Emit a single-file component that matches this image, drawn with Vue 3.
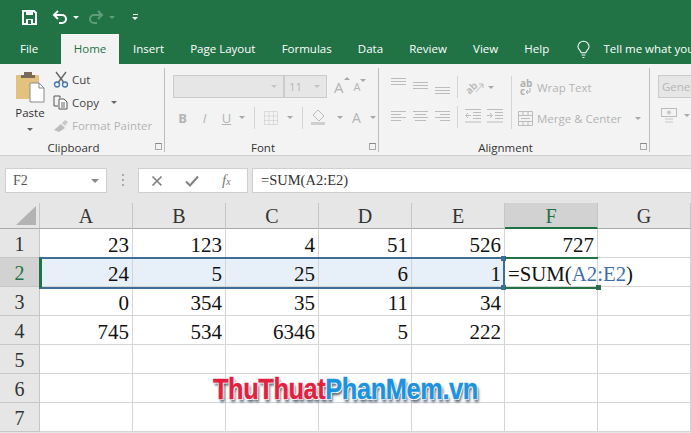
<script setup>
const tabs = ['Insert', 'Page Layout', 'Formulas', 'Data', 'Review', 'View', 'Help']
const cols = ['A', 'B', 'C', 'D', 'E', 'F', 'G']
const rows = [
  ['23', '123', '4', '51', '526', '727', ''],
  ['24', '5', '25', '6', '1', '', ''],
  ['0', '354', '35', '11', '34', '', ''],
  ['745', '534', '6346', '5', '222', '', ''],
  ['', '', '', '', '', '', ''],
  ['', '', '', '', '', '', ''],
  ['', '', '', '', '', '', '']
]
</script>

<template>
  <div class="app">
    <header class="top">
      <div class="qat">
        <svg class="q-save" width="15" height="15" viewBox="0 0 15 15"><path d="M1 1h11l2 2v11H1z" fill="none" stroke="#fff" stroke-width="2"/><path d="M4 1h7v4H4zM4 9h7v5H4z" fill="#fff"/><path d="M6 10h3v4H6z" fill="#217346"/></svg>
        <svg class="q-undo" width="15" height="14" viewBox="0 0 15 14"><path d="M6 1 2 5l4 4M2 5h8a3.500 3.500 0 0 1 0 8H7" fill="none" stroke="#fff" stroke-width="2"/></svg>
        <span class="tri white"></span>
        <svg class="q-redo" width="15" height="14" viewBox="0 0 15 14"><path d="M9 1l4 4-4 4M13 5H5a3.500 3.500 0 0 0 0 8h3" fill="none" stroke="#5f9c7c" stroke-width="2"/></svg>
        <span class="tri dim"></span>
        <span class="q-more"><i></i><b></b></span>
      </div>
      <nav class="tabs">
        <span class="tab file">File</span>
        <span class="tab home">Home</span>
        <span v-for="t in tabs" :key="t" class="tab">{{ t }}</span>
        <svg class="bulb" width="13" height="19" viewBox="0 0 14 19"><path d="M4.500 13C4 10 1 9.500 1 6.500a6 6 0 0 1 12 0c0 3-3 3.500-3.500 6.500zM5 15.500h4M6 18h2" fill="none" stroke="#fff" stroke-width="1.100"/></svg>
        <span class="tab tell">Tell me what you</span>
      </nav>
    </header>

    <section class="ribbon">
      <div class="group clip">
        <div class="body clip-body">
          <div class="paste">
            <svg width="30" height="31" viewBox="0 0 30 31"><rect x="1" y="3" width="23" height="24" rx="1" fill="#e3c17e"/><rect x="9" y="0" width="8" height="5" fill="#7a6a58"/><rect x="6" y="3" width="14" height="3" fill="#7a6a58"/><path d="M15 11h9l5 5v14H15z" fill="#fff" stroke="#8a8a8a"/><path d="M24 11v5h5" fill="none" stroke="#8a8a8a"/></svg>
            <span class="paste-label">Paste</span>
            <span class="tri"></span>
          </div>
          <div class="clip-list">
            <div class="clip-row">
              <svg width="16" height="17" viewBox="0 0 16 17"><path d="M3 1l7.500 10M13 1 5.500 11" stroke="#666" stroke-width="1.400" fill="none"/><circle cx="4" cy="13.500" r="2.500" fill="none" stroke="#3f74b5" stroke-width="1.300"/><circle cx="12" cy="13.500" r="2.500" fill="none" stroke="#3f74b5" stroke-width="1.300"/></svg>
              <span>Cut</span>
            </div>
            <div class="clip-row">
              <svg width="16" height="15" viewBox="0 0 16 15"><path d="M1 1h6v2M1 1v10h4" fill="none" stroke="#555"/><path d="M6 4h5l3 3v7H6z" fill="#fff" stroke="#555"/><path d="M8 8h4M8 10h4M8 12h4" stroke="#666"/></svg>
              <span>Copy</span><span class="tri copy-tri"></span>
            </div>
            <div class="clip-row dim">
              <svg width="16" height="14" viewBox="0 0 16 14"><path d="M1 11 8 5l4 4-6 4z" fill="#bdbdbd"/><path d="M9 4l3-3 3 2-3 4z" fill="#c9c9c9"/></svg>
              <span>Format Painter</span>
            </div>
          </div>
        </div>
        <footer class="label">Clipboard<i class="launch"></i></footer>
      </div>

      <div class="group font">
        <div class="body font-body">
          <div class="font-row">
            <span class="combo name"><span class="tri"></span></span>
            <span class="combo size"><em>11</em><span class="tri"></span></span>
            <span class="glyph big">A<sup class="tri up"></sup></span>
            <span class="glyph small">A<sup class="tri"></sup></span>
          </div>
          <div class="font-row second">
            <b class="fmt first">B</b>
            <i class="fmt">I</i>
            <u class="fmt">U</u>
            <span class="tri"></span>
            <span class="vsep"></span>
            <svg width="14" height="14" viewBox="0 0 14 14"><path d="M.5.500h13v13H.5zM5 .5v13M9.500.500v13M.5 5h13M.5 9.500h13" fill="none" stroke="#c4c4c4" stroke-dasharray="1 1"/></svg>
            <span class="tri"></span>
            <span class="vsep"></span>
            <svg class="bucket" width="18" height="17" viewBox="0 0 18 17"><path d="M8 1l6 6-5 5-6-6z" fill="none" stroke="#bbb"/><rect x="1" y="13" width="14" height="3" fill="#cfcfcf"/></svg>
            <span class="tri"></span>
            <span class="glyph a2">A</span>
            <span class="tri"></span>
          </div>
        </div>
        <footer class="label">Font<i class="launch"></i></footer>
      </div>

      <div class="group align">
        <div class="body align-body">
          <div class="align-grid">
            <svg class="va top1" width="15" height="7" viewBox="0 0 15 7"><path d="M0 .5h15M0 3.500h15M0 6.500h15" stroke="#bcbcbc"/></svg>
            <svg class="va mid1" width="15" height="7" viewBox="0 0 15 7"><path d="M0 .5h15M0 3.500h15M0 6.500h15" stroke="#bcbcbc"/></svg>
            <svg class="va low1" width="15" height="7" viewBox="0 0 15 7"><path d="M0 .5h15M0 3.500h15M0 6.500h15" stroke="#bcbcbc"/></svg>
            <svg width="15" height="12" viewBox="0 0 15 12"><path d="M0 .5h15M0 3.500h10M0 6.500h15M0 9.500h10" stroke="#bcbcbc"/></svg>
            <svg width="15" height="12" viewBox="0 0 15 12"><path d="M0 .5h15M2 3.500h11M0 6.500h15M2 9.500h11" stroke="#bcbcbc"/></svg>
            <svg width="15" height="12" viewBox="0 0 15 12"><path d="M0 .5h15M5 3.500h10M0 6.500h15M5 9.500h10" stroke="#bcbcbc"/></svg>
          </div>
          <div class="seps"><span class="vsep"></span><span class="vsep"></span></div>
          <div class="indent">
            <div class="orient">
              <span class="rot">ab</span>
              <svg class="rot-arrow" width="9" height="11" viewBox="0 0 9 11"><path d="M1 10 8 2M8 2v4M8 2H4" fill="none" stroke="#bcbcbc"/></svg>
              <span class="tri"></span>
            </div>
            <div class="ind-row">
              <svg width="16" height="14" viewBox="0 0 16 14"><path d="M0 .5h16M8 3.500h8M8 6.500h8M8 9.500h8M0 13h16M6 6.500H1M3 4 .8 6.500 3 9" fill="none" stroke="#bcbcbc"/></svg>
              <svg width="16" height="14" viewBox="0 0 16 14"><path d="M0 .5h16M8 3.500h8M8 6.500h8M8 9.500h8M0 13h16M0 6.500h5M3 4l2.200 2.500L3 9" fill="none" stroke="#bcbcbc"/></svg>
            </div>
          </div>
          <span class="vsep tall"></span>
          <div class="wrap">
            <div class="wrap-row">
              <span class="ab"><span>ab</span><span class="ab-c">c<svg width="6" height="6" viewBox="0 0 6 6"><path d="M5 0v4H1M3 2 1 4l2 2" fill="none" stroke="#b0b0b0"/></svg></span></span>
              <span>Wrap Text</span>
            </div>
            <div class="wrap-row merge">
              <svg width="15" height="15" viewBox="0 0 15 15"><path d="M.5.500h14v14H.5zM.5 4.500h14M.5 10.500h14M5 .5v4M10 .5v4M5 10.500v4M10 10.500v4M3 7.500h9" fill="none" stroke="#bcbcbc"/></svg>
              <span>Merge &amp; Center</span>
              <span class="tri"></span>
            </div>
          </div>
        </div>
        <footer class="label">Alignment<i class="launch"></i></footer>
      </div>

      <div class="group num">
        <span class="combo gen">Gener</span>
        <div class="cur">
          <svg width="16" height="15" viewBox="0 0 16 15"><rect x=".5" y=".5" width="15" height="8" fill="none" stroke="#bcbcbc"/><circle cx="8" cy="4.500" r="2" fill="#c8c8c8"/><path d="M4 11h8M4 14h8" stroke="#c8c8c8"/></svg>
          <span class="tri"></span>
        </div>
      </div>
    </section>

    <section class="fbar">
      <div class="namebox">F2<span class="tri"></span></div>
      <span class="dots"></span>
      <div class="fbtns">
        <svg width="12" height="12" viewBox="0 0 12 12"><path d="M1.500 1.500l9 9M10.500 1.500l-9 9" stroke="#808080" stroke-width="1.700"/></svg>
        <svg width="14" height="12" viewBox="0 0 14 12"><path d="M1 6.500 5 10.500 13 1.500" fill="none" stroke="#808080" stroke-width="2"/></svg>
        <i class="fx">f<small>x</small></i>
      </div>
      <div class="finput">=SUM(A2:E2)</div>
    </section>

    <section class="sheet">
      <div class="grid">
        <div class="corner"><span></span></div>
        <div v-for="c in cols" :key="c" class="chead" :class="{ active: c === 'F' }">{{ c }}</div>
        <template v-for="(r, i) in rows" :key="i">
          <div class="rhead" :class="{ active: i === 1 }">{{ i + 1 }}</div>
          <div
            v-for="(v, j) in r"
            :key="j"
            class="cell"
            :class="{ sel: i === 1 && j < 5 }"
          >{{ v }}</div>
        </template>
      </div>
      <div class="range">
        <i class="h tl"></i><i class="h bl"></i>
      </div>
      <div class="edit">=SUM(<span class="ref">A2:E2</span>)<i class="h br"></i></div>
      <div class="mark"><span class="red">ThuThuat</span><span class="blue">PhanMem.vn</span></div>
    </section>
  </div>
</template>

<style scoped>
.app { width: 691px; height: 433px; overflow: hidden; background: #e6e6e6; font-family: "Open Sans", "Noto Sans", sans-serif; font-size: 11.5px; color: #444; display: flex; flex-direction: column; }
.top { height: 64px; background: #217346; color: #fff; flex: none; }
.qat { height: 34px; display: flex; align-items: center; padding-left: 22px; }
.q-save { margin-right: 15px; }
.q-undo { margin-right: 6px; }
.q-redo { margin-left: 10px; margin-right: 5px; }
.q-more { margin-left: 17px; display: flex; flex-direction: column; align-items: center; gap: 2px; }
.q-more i { width: 5px; height: 1px; background: #fff; }
.q-more b { width: 0; height: 0; border: 3px solid transparent; border-top-color: #fff; border-bottom: 0; }
.tri { display: inline-block; width: 0; height: 0; border: 3px solid transparent; border-top-color: #a8a8a8; border-bottom: 0; flex: none; }
.tri.white { border-top-color: #fff; }
.tri.dim { border-top-color: #5f9c7c; }
.tabs { height: 30px; display: flex; align-items: center; }
.tab { white-space: nowrap; padding-right: 26.200px; line-height: 30px; flex: none; }
.file { width: 61px; box-sizing: border-box; padding: 0 0 0 20px; }
.home { background: #f3f3f3; color: #217346; width: 58px; box-sizing: border-box; padding: 0; text-align: center; margin-right: 14px; height: 30px; }
.bulb { flex: none; margin-left: 2px; margin-right: 13px; }
.tell { padding: 0; }
.ribbon { height: 91px; flex: none; background: #f3f3f3; border-bottom: 1px solid #d2d2d2; display: flex; }
.group { position: relative; box-sizing: border-box; height: 84px; margin-top: 4px; border-right: 1px solid #bdbdbd; display: flex; flex-direction: column; flex: none; }
.body { flex: 1; min-height: 0; }
.label { height: 13px; line-height: 13px; margin-bottom: -2px; padding-right: 17px; font-size: 11.500px; text-align: center; color: #333; position: relative; }
.launch { position: absolute; right: 2px; top: 2px; width: 7px; height: 7px; box-sizing: border-box; border: 1px solid #aaa; border-top-color: #888; }
.clip { width: 165px; }
.clip-body { display: flex; padding: 0 0 0 15px; }
.paste { width: 30px; margin-top: 4px; display: flex; flex-direction: column; align-items: center; }
.paste-label { margin-top: 1px; line-height: 18px; color: #333; }
.paste .tri { margin-top: 6px; border-top-color: #666; }
.clip-list { margin-left: 7px; display: flex; flex-direction: column; }
.clip-row { height: 23px; display: flex; align-items: center; gap: 3px; color: #444; white-space: nowrap; }
.clip-row svg { margin-left: 1px; flex: none; }
.clip-row.dim { color: #b4b4b4; }
.copy-tri { margin-left: 9px; border-top-color: #666; }
.font { width: 214px; }
.font-body { padding: 7px 0 0 8px; }
.font-row { display: flex; align-items: center; height: 23px; }
.combo { box-sizing: border-box; height: 23px; background: #e6e6e6; border: 1px solid #cbcbcb; display: flex; align-items: center; justify-content: flex-end; color: #b6b6b6; }
.combo .tri { margin-right: 6px; border-top-color: #c4c4c4; }
.name { width: 111px; }
.size { width: 43px; justify-content: space-between; }
.size em { font-style: normal; margin-left: 4px; }
.glyph { color: #b4b4b4; position: relative; }
.big { font-size: 15px; margin-left: 7px; }
.small { font-size: 11px; margin-left: 10px; }
.glyph sup { position: absolute; top: 0; right: -6px; }
.up { border: 3px solid transparent; border-bottom-color: #a8a8a8; border-top: 0; }
.second { margin-top: 8px; gap: 9px; color: #b4b4b4; }
.first { margin-left: 3px; }
.fmt { font-size: 13px; width: 13px; text-align: center; font-style: normal; }
i.fmt { font-style: italic; }
.second .fmt + .tri { margin-left: -3px; }
.vsep { width: 1px; height: 22px; background: #d4d4d4; flex: none; display: block; }
.bucket { margin-left: -2px; }
.a2 { font-size: 14px; }
.align { width: 271px; }
.align-body { display: flex; align-items: flex-start; padding: 8px 0 0 12px; }
.align-grid { display: grid; grid-template-columns: repeat(3, 15px); grid-template-rows: 22px 22px; column-gap: 7px; row-gap: 8px; align-items: center; }
.va { align-self: start; }
.top1 { margin-top: 2px; }
.mid1 { margin-top: 6px; }
.low1 { margin-top: 11px; }
.seps { margin-left: 7px; display: flex; flex-direction: column; gap: 8px; }
.tall { height: 53px; margin: 0 6px 0 0; }
.indent { width: 46px; margin-left: 7px; display: flex; flex-direction: column; gap: 12px; }
.orient { display: flex; align-items: center; height: 19px; padding-top: 2px; color: #bcbcbc; }
.rot { display: block; transform: rotate(-45deg); font-size: 10px; font-weight: 700; line-height: 12px; width: 12px; }
.rot-arrow { margin-left: -2px; margin-right: 4px; }
.ind-row { display: flex; gap: 6px; }
.wrap { color: #b4b4b4; display: flex; flex-direction: column; gap: 9px; }
.wrap-row { display: flex; align-items: center; gap: 4px; height: 22px; white-space: nowrap; }
.ab { display: flex; flex-direction: column; font-size: 10px; line-height: 8px; font-weight: 700; color: #b0b0b0; width: 13px; margin-left: 2px; }
.ab-c { display: flex; align-items: center; gap: 0; }
.merge .tri { margin-left: 9px; }
.num { flex: 1; min-width: 0; border: 0; padding: 7px 0 0 8px; }
.gen { width: 60px; justify-content: flex-start; padding-left: 3px; border-right: 0; }
.cur { display: flex; align-items: center; gap: 7px; margin-top: 10px; margin-left: 3px; }
.fbar { height: 47px; flex: none; box-sizing: border-box; padding-top: 12px; display: flex; align-items: flex-start; background: #e6e6e6; }
.namebox { box-sizing: border-box; width: 102px; height: 25px; margin-left: 5px; background: #fff; border: 1px solid #cfcfcf; display: flex; align-items: center; justify-content: space-between; padding: 0 7px; font-family: "Liberation Serif", serif; font-size: 14px; color: #555; }
.namebox .tri { border-width: 4px; border-bottom: 0; border-top-color: #888; }
.dots { width: 2px; height: 13px; margin: 6px 14px 0 15px; background: repeating-linear-gradient(#aaa 0 2px, transparent 2px 5px); }
.fbtns { box-sizing: border-box; width: 110px; height: 25px; background: #fff; border: 1px solid #cfcfcf; display: flex; align-items: center; gap: 22px; padding-left: 12px; }
.fx { font-family: "Liberation Serif", serif; font-size: 15px; color: #7a7a7a; margin-left: 1px; }
.fx small { font-size: 10px; }
.finput { flex: 1; height: 25px; box-sizing: border-box; margin-left: 4px; background: #fff; border-top: 1px solid #cfcfcf; border-bottom: 1px solid #cfcfcf; border-left: 1px solid #cfcfcf; padding-left: 8px; line-height: 23px; font-family: "Liberation Serif", serif; font-size: 14.500px; color: #333; }
.sheet { position: relative; flex: 1; min-height: 0; font-family: "Liberation Serif", serif; color: #111; }
.grid { display: grid; grid-template-columns: 40px repeat(7, 93px); grid-template-rows: 26px repeat(7, 29px); }
.corner, .chead, .rhead { background: #e6e6e6; box-sizing: border-box; border-right: 1px solid #c6c6c6; border-bottom: 1px solid #a9a9a9; }
.corner { position: relative; }
.corner span { position: absolute; right: 3px; bottom: 3px; width: 0; height: 0; border-style: solid; border-width: 0 0 19px 20px; border-color: transparent transparent #b3b3b3 transparent; }
.chead { text-align: center; font-size: 20px; line-height: 27px; color: #333; }
.chead.active { background: #d2d2d2; color: #217346; border-bottom: 2px solid #217346; }
.rhead { text-align: center; font-size: 20px; line-height: 31px; color: #333; border-bottom-color: #c6c6c6; }
.rhead.active { background: #d2d2d2; color: #217346; }
.cell { box-sizing: border-box; background: #fff; border-right: 1px solid #d4d4d4; border-bottom: 1px solid #d4d4d4; text-align: right; font-size: 21px; line-height: 32px; height: 29px; padding-right: 3px; color: #111; white-space: nowrap; }
.cell.sel { background: #e7eff9; }
.range { position: absolute; left: 39px; top: 54px; width: 466px; height: 32px; box-sizing: border-box; border: 2px solid #3f6d96; border-left: 3px solid #217346; pointer-events: none; }
.h { position: absolute; width: 5px; height: 5px; background: #3f6d96; right: -3px; }
.tl { top: -3px; }
.bl { bottom: -3px; }
.edit { position: absolute; left: 505px; top: 54px; width: 93px; height: 32px; box-sizing: border-box; border-top: 2px solid #217346; border-bottom: 2px solid #217346; padding-left: 3px; font-size: 20.800px; line-height: 30px; white-space: nowrap; color: #111; }
.br { bottom: -3px; right: -3px; background: #2f6b52; }
.ref { color: #3f6da8; }
.mark { position: absolute; left: 213px; top: 170px; transform: scaleX(.847); transform-origin: left center; font-family: "Liberation Sans", sans-serif; font-weight: 700; font-size: 30px; line-height: 32px; letter-spacing: -.5px; white-space: nowrap; -webkit-text-stroke: .4px currentColor; text-shadow: -1px -1px 0 #fff, 1px -1px 0 #fff, -1px 1px 0 #fff, 1px 1px 0 #fff, 2px 3px 3px #4a5a6a; }
.red { color: #e0213f; }
.blue { color: #1c93de; }
</style>

<style>
html, body { margin: 0; padding: 0; }
</style>
